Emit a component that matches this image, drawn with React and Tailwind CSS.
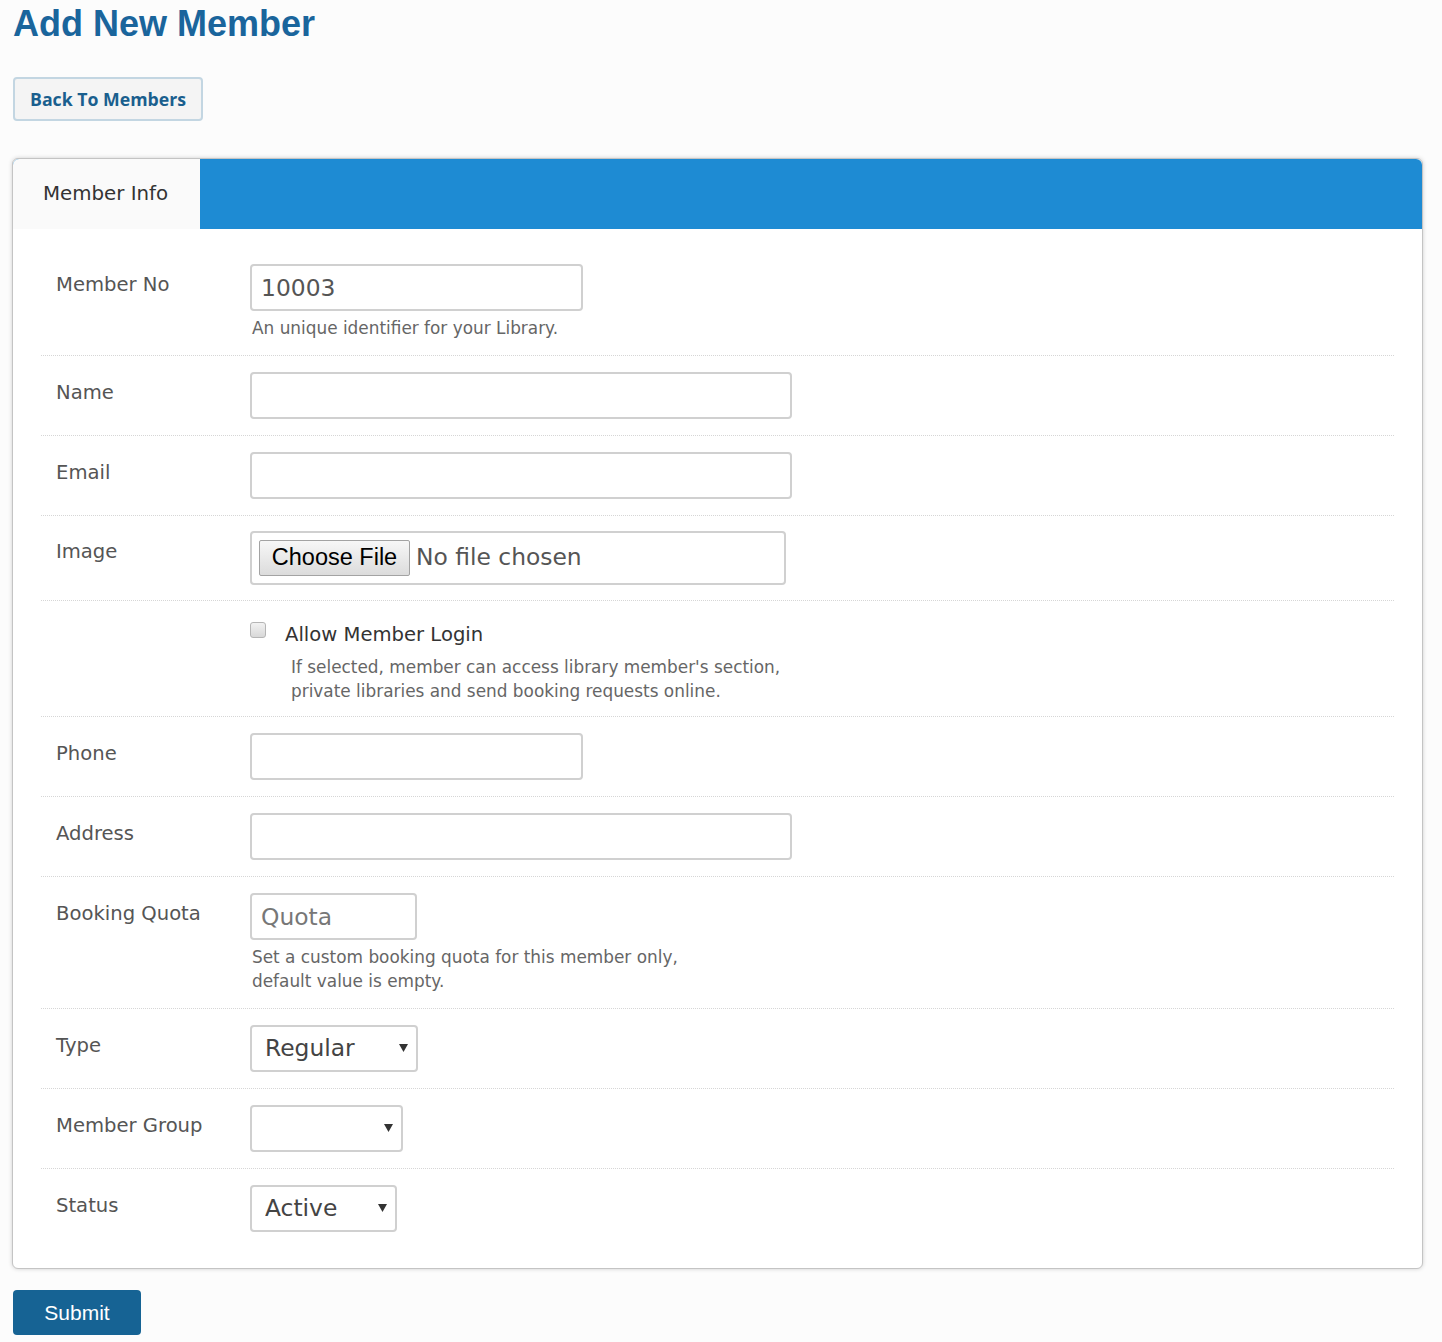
import React, { useState } from "react";

const labelCls = "w-[209px] shrink-0 pl-[15px] pt-[7px] leading-[28px] text-[19.6px] text-[#555]";
const inputCls =
  "h-[47px] border-2 border-[#d0d0d0] rounded-[4px] bg-white px-[9px] text-[23.4px] text-[#555] outline-none placeholder:text-[#777]";
const helpCls = "mt-[5px] pl-[2px] leading-[24px] text-[16.9px] text-[#666]";

const Row = ({ label, first = false, tight = false, children }) => (
  <div
    className={`flex pt-[16px] ${first ? "" : "border-t border-dotted border-[#d6d6d6]"} ${tight ? "pb-[15px]" : "pb-[16px]"}`}
  >
    <div className={labelCls}>{label}</div>
    <div className="flex-1">{children}</div>
  </div>
);

const Select = ({ width, value, options }) => (
  <div className={`relative ${width}`}>
    <select
      defaultValue={value}
      className="h-[47px] w-full appearance-none border-2 border-[#d0d0d0] rounded-[4px] bg-white pl-[13px] pr-[30px] text-[23.4px] text-[#444] outline-none"
    >
      {options.map((o) => (
        <option key={o}>{o}</option>
      ))}
    </select>
    {/* arrow */}
    <svg
      className="pointer-events-none absolute right-[10px] top-[19px]"
      width="9"
      height="8"
      viewBox="0 0 9 8"
    >
      <path d="M0 0 H9 L4.5 8 Z" fill="#333" />
    </svg>
  </div>
);

export default function App() {
  const [memberNo, setMemberNo] = useState("10003");
  const [allowLogin, setAllowLogin] = useState(false);

  return (
    <div
      className="min-h-[1342px] bg-[#fcfcfc] pl-[12px] pr-[19px] pb-[8px]"
      style={{ fontFamily: '"DejaVu Sans", Verdana, sans-serif' }}
    >
      <h1
        className="ml-px pt-[5px] text-[36px] leading-[37px] font-bold text-[#1a659c]"
        style={{ fontFamily: '"Liberation Sans", Arial, sans-serif' }}
      >
        Add New Member
      </h1>

      <button
        className="ml-px mt-[35px] h-[44px] px-[15px] rounded-[4px] border-2 border-[#c3d6e2] bg-[#f4f4f4] text-[17.7px] font-bold text-[#1a5f8e]"
        style={{ fontFamily: '"Open Sans", Tahoma, sans-serif' }}
      >
        Back To Members
      </button>

      {/* CARD */}
      <div className="mt-[37px] rounded-[6px] border border-[#c4c4c4] bg-white shadow-[0_0_4px_rgba(0,0,0,0.18)]">
        <div className="flex h-[70px] overflow-hidden rounded-t-[6px] bg-[#1e8bd3]">
          <div className="flex w-[187px] items-center bg-[#fafafa] pl-[30px] text-[19.8px] text-[#333]">
            Member Info
          </div>
        </div>

        <div className="px-[28px] pt-[19px] pb-[20px]">
          <Row label="Member No" first tight>
            <input
              value={memberNo}
              onChange={(e) => setMemberNo(e.target.value)}
              className={`${inputCls} w-[333px]`}
            />
            <p className={helpCls}>An unique identifier for your Library.</p>
          </Row>

          <Row label="Name">
            <input className={`${inputCls} w-[542px]`} />
          </Row>

          <Row label="Email">
            <input className={`${inputCls} w-[542px]`} />
          </Row>

          <div className="flex border-t border-dotted border-[#d6d6d6] pt-[15px] pb-[15px]">
            <div className={labelCls}>Image</div>
            <div className="flex h-[54px] w-[536px] items-center border-2 border-[#d0d0d0] rounded-[4px] bg-white pl-[7px]">
              <button
                className="h-[36px] w-[151px] rounded-[2px] border border-[#a3a3a3] bg-gradient-to-b from-[#f7f7f7] to-[#dcdcdc] text-[23.5px] leading-none text-black"
                style={{ fontFamily: '"Liberation Sans", Arial, sans-serif' }}
              >
                Choose File
              </button>
              <span className="ml-[6px] text-[23.4px] text-[#555]">No file chosen</span>
            </div>
          </div>

          {/* ALLOW LOGIN */}
          <div className="border-t border-dotted border-[#d6d6d6] pt-[22px] pb-[13px] pl-[209px]">
            <label className="flex items-start leading-[24px] text-[19.6px] text-[#333]">
              <input
                type="checkbox"
                checked={allowLogin}
                onChange={(e) => setAllowLogin(e.target.checked)}
                className="mt-[-1px] h-[16px] w-[16px] appearance-none rounded-[3px] border border-[#b5b5b5] bg-gradient-to-b from-[#f2f2f2] to-[#d8d8d8] checked:bg-[#1e8bd3]"
              />
              <span className="ml-[19px]">Allow Member Login</span>
            </label>
            <p className="mt-[8px] pl-[41px] leading-[24px] text-[16.9px] text-[#666]">
              If selected, member can access library member's section,
              <br />
              private libraries and send booking requests online.
            </p>
          </div>

          <Row label="Phone">
            <input className={`${inputCls} w-[333px]`} />
          </Row>

          <Row label="Address">
            <input className={`${inputCls} w-[542px]`} />
          </Row>

          <Row label="Booking Quota" tight>
            <input placeholder="Quota" className={`${inputCls} w-[167px]`} />
            <p className={helpCls}>
              Set a custom booking quota for this member only,
              <br />
              default value is empty.
            </p>
          </Row>

          <Row label="Type">
            <Select width="w-[168px]" value="Regular" options={["Regular", "Premium"]} />
          </Row>

          <Row label="Member Group">
            <Select width="w-[153px]" value="" options={[""]} />
          </Row>

          <Row label="Status">
            <Select width="w-[147px]" value="Active" options={["Active", "Inactive"]} />
          </Row>
        </div>
      </div>

      <button
        className="ml-px mt-[21px] h-[45px] w-[128px] rounded-[4px] bg-[#166394] text-[21px] text-white"
        style={{ fontFamily: '"Liberation Sans", Arial, sans-serif' }}
      >
        Submit
      </button>
    </div>
  );
}
